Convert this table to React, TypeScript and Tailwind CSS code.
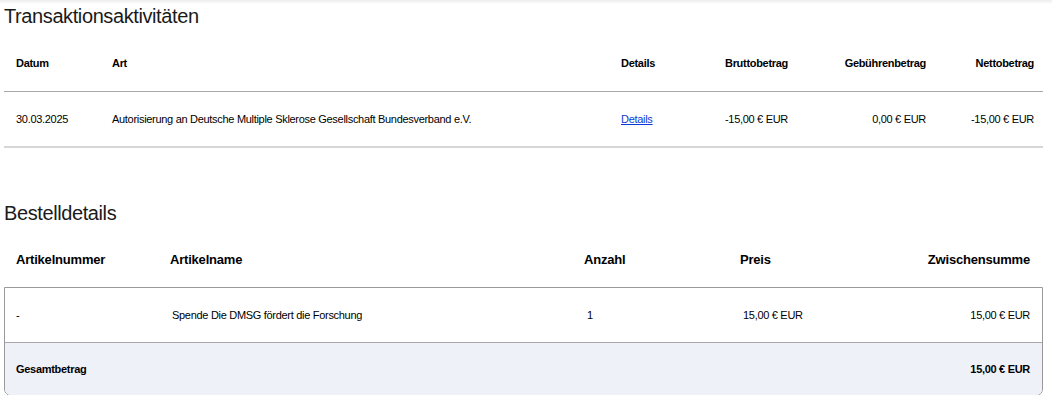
const txRows = [
  {
    date: '30.03.2025',
    type: 'Autorisierung an Deutsche Multiple Sklerose Gesellschaft Bundesverband e.V.',
    gross: '-15,00 € EUR',
    fee: '0,00 € EUR',
    net: '-15,00 € EUR',
  },
]

const orderRows = [
  {
    number: '-',
    name: 'Spende Die DMSG fördert die Forschung',
    qty: '1',
    price: '15,00 € EUR',
    subtotal: '15,00 € EUR',
  },
]

export default function App() {
  return (
    <div
      className="h-[395px] w-[1052px] overflow-hidden bg-white text-[11px] tracking-[-0.3px] text-black"
      style={{ fontFamily: '"Liberation Sans", Arial, sans-serif' }}
    >
      <div className="h-[4px] bg-gradient-to-b from-[#ececec] to-white" />
      <div className="pl-[4px] pr-[9px]">
        <h2 className="text-[20px] leading-[24px] tracking-[-0.4px] text-[#1a1a1a]">
          Transaktionsaktivitäten
        </h2>

        <table className="mt-[8px] w-full border-collapse">
          <thead>
            <tr className="h-[55px] border-b border-[#a8a8a8] font-bold">
              <th className="w-[108px] pl-[12px] text-left">Datum</th>
              <th className="text-left">Art</th>
              <th className="w-[67px] text-left">Details</th>
              <th className="w-[100px] text-right">Bruttobetrag</th>
              <th className="w-[138px] text-right">Gebührenbetrag</th>
              <th className="w-[117px] pr-[9px] text-right">Nettobetrag</th>
            </tr>
          </thead>
          <tbody>
            {txRows.map((r) => (
              <tr key={r.date} className="h-[56px] border-b-2 border-[#d6d6d6]">
                <td className="pl-[12px]">{r.date}</td>
                <td>{r.type}</td>
                <td>
                  <a href="#" className="text-[#0b3bd6] underline">
                    Details
                  </a>
                </td>
                <td className="text-right">{r.gross}</td>
                <td className="text-right">{r.fee}</td>
                <td className="pr-[9px] text-right">{r.net}</td>
              </tr>
            ))}
          </tbody>
        </table>

        <h2 className="mt-[53px] text-[20px] leading-[24px] tracking-[-0.4px] text-[#1a1a1a]">
          Bestelldetails
        </h2>

        <div className="mt-[8px] flex h-[54px] items-center text-[13px] font-bold tracking-[-0.2px]">
          <div className="w-[166px] pl-[12px]">Artikelnummer</div>
          <div className="w-[414px]">Artikelname</div>
          <div className="w-[156px]">Anzahl</div>
          <div className="flex-1">Preis</div>
          <div className="pr-[13px] text-right">Zwischensumme</div>
        </div>

        <div className="overflow-hidden rounded-b-[7px] border border-[#9a9a9a]">
          {orderRows.map((r) => (
            <div key={r.name} className="flex h-[55px] items-center border-b border-[#a8a8a8]">
              <div className="w-[167px] pl-[11px]">{r.number}</div>
              <div className="w-[415px]">{r.name}</div>
              <div className="w-[156px]">{r.qty}</div>
              <div className="flex-1">{r.price}</div>
              <div className="pr-[12px] text-right">{r.subtotal}</div>
            </div>
          ))}
          <div className="flex h-[52px] items-center bg-[#eef1f8] font-bold">
            <div className="flex-1 pl-[11px]">Gesamtbetrag</div>
            <div className="pr-[12px] text-right">15,00 € EUR</div>
          </div>
        </div>
      </div>
    </div>
  )
}
